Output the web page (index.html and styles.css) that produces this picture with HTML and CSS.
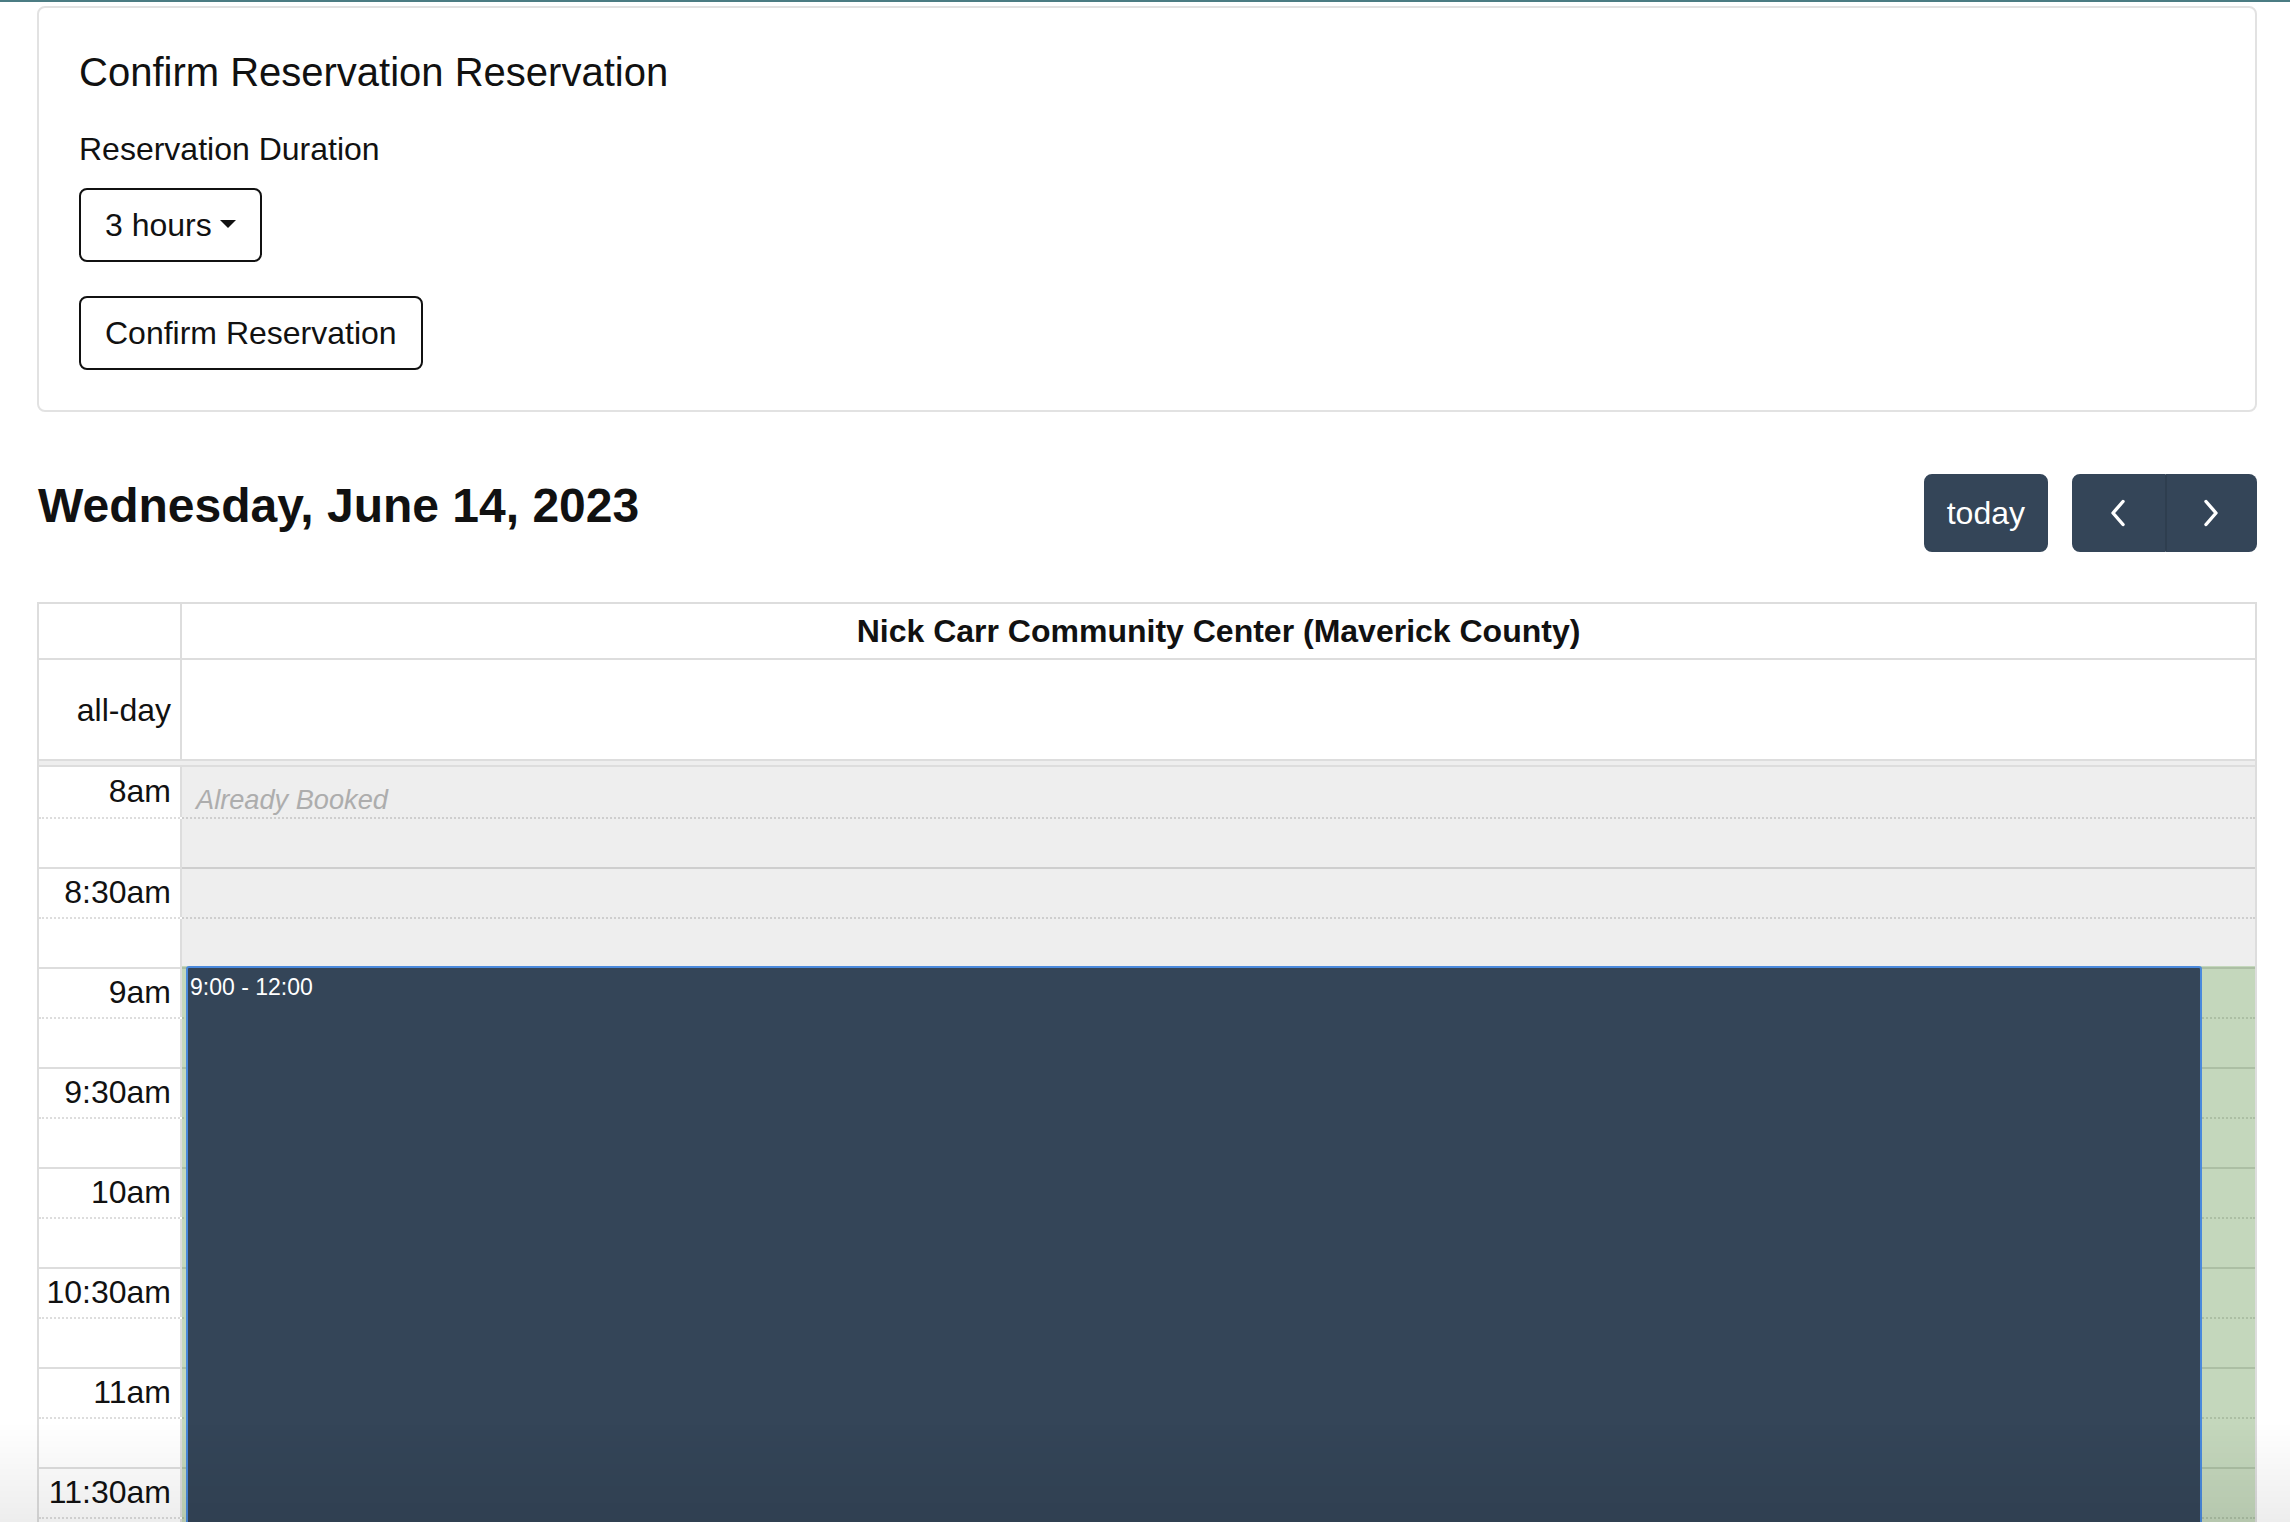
FILE: index.html
```html
<!DOCTYPE html>
<html lang="en">
<head>
<meta charset="utf-8">
<title>Confirm Reservation</title>
<link rel="stylesheet" href="styles.css">
</head>
<body>
<div class="topbar"></div>
<main class="page">
  <section class="card">
    <h5 class="card-title">Confirm Reservation Reservation</h5>
    <label class="field-label">Reservation Duration</label>
    <div><button class="btn-outline" type="button">3 hours<span class="caret"></span></button></div>
    <div class="confirm-row"><button class="btn-outline" type="button">Confirm Reservation</button></div>
  </section>

  <div class="cal">
    <div class="toolbar">
      <h2 class="cal-title">Wednesday, June 14, 2023</h2>
      <div class="tb-right">
        <button class="fc-btn today" type="button">today</button>
        <div class="btn-group">
          <button class="fc-btn" type="button" aria-label="prev">
            <svg class="chev" viewBox="0 0 16 28" width="16" height="28"><polyline points="13,2.5 3,14 13,25.5"/></svg>
          </button>
          <button class="fc-btn" type="button" aria-label="next">
            <svg class="chev" viewBox="0 0 16 28" width="16" height="28"><polyline points="3,2.5 13,14 3,25.5"/></svg>
          </button>
        </div>
      </div>
    </div>

    <div class="grid">
      <div class="head-row">
        <div class="axis"></div>
        <div class="col-head">Nick Carr Community Center (Maverick County)</div>
      </div>
      <div class="allday-row">
        <div class="axis">all-day</div>
        <div class="col"></div>
      </div>
      <div class="divider"></div>
      <div class="scroller">
        <div class="slot first"><div class="axis">8am</div><div class="col"></div></div>
        <div class="slot minor"><div class="axis"></div><div class="col"></div></div>
        <div class="slot"><div class="axis">8:30am</div><div class="col"></div></div>
        <div class="slot minor"><div class="axis"></div><div class="col"></div></div>
        <div class="slot"><div class="axis">9am</div><div class="col"></div></div>
        <div class="slot minor"><div class="axis"></div><div class="col"></div></div>
        <div class="slot"><div class="axis">9:30am</div><div class="col"></div></div>
        <div class="slot minor"><div class="axis"></div><div class="col"></div></div>
        <div class="slot"><div class="axis">10am</div><div class="col"></div></div>
        <div class="slot minor"><div class="axis"></div><div class="col"></div></div>
        <div class="slot"><div class="axis">10:30am</div><div class="col"></div></div>
        <div class="slot minor"><div class="axis"></div><div class="col"></div></div>
        <div class="slot"><div class="axis">11am</div><div class="col"></div></div>
        <div class="slot minor"><div class="axis"></div><div class="col"></div></div>
        <div class="slot"><div class="axis">11:30am</div><div class="col"></div></div>
        <div class="slot minor"><div class="axis"></div><div class="col"></div></div>

        <div class="layer">
          <div class="bg-booked"><div class="booked-title">Already Booked</div></div>
          <div class="bg-available"></div>
          <a class="event"><span class="ev-time">9:00 - 12:00</span></a>
        </div>
      </div>
    </div>
  </div>
</main>
<div class="bottom-fade"></div>
</body>
</html>
```

FILE: styles.css
```css
html, body {
  margin: 0;
  padding: 0;
  overflow: hidden;
  background: #fff;
}

body {
  font-family: "Liberation Sans", Arial, Helvetica, sans-serif;
  font-size: 32px;
  line-height: 1.5;
  color: #111;
}

.topbar {
  height: 2px;
  background: #4b7c83;
}

.page {
  padding: 4px 33px 0 37px;
}

/* ---------- card ---------- */
.card {
  border: 2px solid #e2e2e2;
  border-radius: 8px;
  padding: 40px;
}

.card-title {
  margin: 0 0 29px;
  font-size: 40px;
  font-weight: 400;
  line-height: 1.2;
}

.field-label {
  display: block;
  margin-bottom: 15px;
}

.btn-outline {
  font: inherit;
  color: #111;
  background: #fff;
  border: 2px solid #111;
  border-radius: 8px;
  padding: 11px 24px;
  line-height: 48px;
  margin: 0;
  cursor: pointer;
}

.confirm-row {
  margin-top: 34px;
}

.caret {
  display: inline-block;
  margin-left: 8px;
  vertical-align: 0.255em;
  border-top: 8px solid currentColor;
  border-left: 8px solid transparent;
  border-right: 8px solid transparent;
}

/* ---------- toolbar ---------- */
.toolbar {
  display: flex;
  justify-content: space-between;
  align-items: flex-start;
  margin-top: 62px;
  margin-bottom: 50px;
}

.cal-title {
  margin: 3px 0 0 1px;
  font-size: 48px;
  font-weight: 700;
  line-height: 1.2;
}

.tb-right {
  display: flex;
  gap: 24px;
}

.fc-btn {
  height: 78px;
  box-sizing: border-box;
  margin: 0;
  border: 2px solid #344558;
  background: #344558;
  color: #fff;
  font: inherit;
  line-height: 48px;
  display: inline-flex;
  align-items: center;
  justify-content: center;
  border-radius: 8px;
  padding: 0 21px;
  cursor: pointer;
}

.btn-group {
  display: flex;
  width: 185px;
}

.btn-group .fc-btn {
  flex: 1;
  padding: 0;
}

.btn-group .fc-btn:first-child {
  border-radius: 8px 0 0 8px;
}

.btn-group .fc-btn:last-child {
  border-radius: 0 8px 8px 0;
  border-left-color: #2e3e4f;
}

.chev {
  display: block;
  fill: none;
  stroke: #fff;
  stroke-width: 3.4;
  stroke-linecap: round;
  stroke-linejoin: round;
}

/* ---------- grid ---------- */
.grid {
  border: 2px solid #ddd;
  border-bottom: none;
}

.axis {
  width: 143px;
  flex: none;
  box-sizing: border-box;
  border-right: 2px solid #ddd;
  text-align: right;
  padding-right: 9px;
  white-space: nowrap;
}

.col {
  flex: 1;
}

.head-row {
  display: flex;
  border-bottom: 2px solid #ddd;
}

.col-head {
  flex: 1;
  text-align: center;
  font-weight: 700;
  padding: 3px 0;
  line-height: 48px;
}

.allday-row {
  display: flex;
  height: 99px;
}

.allday-row .axis {
  display: flex;
  align-items: center;
  justify-content: flex-end;
}

.divider {
  height: 4px;
  background: #eee;
  border-top: 2px solid #ddd;
  border-bottom: 2px solid #ddd;
}

.scroller {
  position: relative;
  height: 755px;
  overflow: hidden;
}

.slot {
  display: flex;
  height: 50px;
  box-sizing: border-box;
  border-top: 2px solid #ddd;
}

.slot.first {
  border-top: none;
}

.slot.minor {
  border-top-style: dotted;
}

.slot .axis {
  line-height: 46px;
}

.slot.first .axis {
  line-height: 48px;
}

.layer {
  position: absolute;
  top: 0;
  bottom: 0;
  left: 143px;
  right: 0;
}

.bg-booked {
  position: absolute;
  left: 0;
  right: 0;
  top: 0;
  height: 199px;
  background: rgba(0, 0, 0, 0.065);
}

.booked-title {
  font-style: italic;
  font-size: 27.2px;
  line-height: 1.5;
  color: #adadad;
  padding: 13px 0 0 14px;
}

.bg-available {
  position: absolute;
  left: 0;
  right: 0;
  top: 199px;
  bottom: 0;
  background: rgba(58, 122, 32, 0.3);
}

.event {
  position: absolute;
  left: 4px;
  right: 53px;
  top: 199px;
  height: 600px;
  box-sizing: border-box;
  background: #344558;
  border: 2px solid #4a89dc;
  border-radius: 3px 3px 0 0;
  color: #fff;
  font-size: 23px;
  line-height: 1.4;
  padding: 3px 2px;
}

.bottom-fade {
  position: fixed;
  left: 0;
  right: 0;
  bottom: 0;
  height: 100px;
  background: linear-gradient(to bottom, rgba(0, 0, 0, 0), rgba(0, 0, 0, 0.07));
  pointer-events: none;
  z-index: 10;
}
```
